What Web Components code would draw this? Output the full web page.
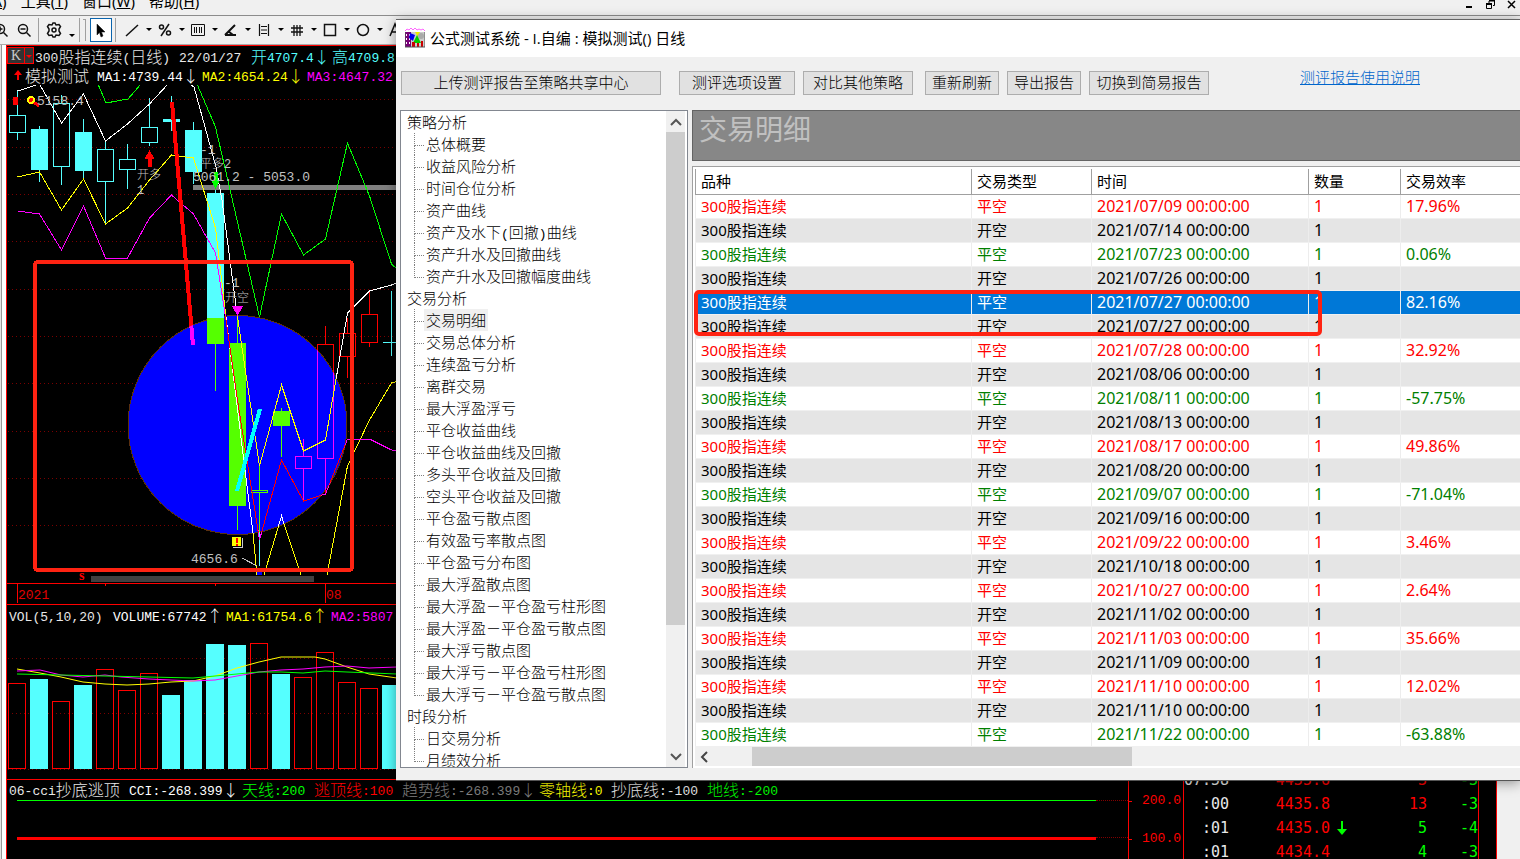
<!DOCTYPE html>
<html lang="zh-CN">
<head>
<meta charset="utf-8">
<title>公式测试系统</title>
<style>
html,body{height:100%;margin:0}
body{background:#f0f0f0;overflow:hidden;font-family:"Noto Sans","Noto Sans CJK SC",sans-serif;font-size:15px;color:#000}
</style>
</head>
<body>
<trading-desk>
  <menu-bar slot="menu"></menu-bar>
  <tool-strip slot="tools"></tool-strip>
  <price-pane slot="panes"></price-pane>
  <volume-pane slot="panes"></volume-pane>
  <cci-pane slot="panes"></cci-pane>
  <value-axis slot="axis"></value-axis>
  <tick-list slot="ticks"></tick-list>
  <report-window slot="windows">
    <span slot="title">公式测试系统 - I.自编 : 模拟测试() 日线</span>
    <report-actions slot="actions"></report-actions>
    <report-tree slot="nav"></report-tree>
    <trade-report slot="content"></trade-report>
  </report-window>
</trading-desk>

<script>
const define = (name, html, setup) => {
  const tpl = document.createElement('template');
  tpl.innerHTML = '<style>:host,*{box-sizing:border-box}</style>' + html;
  customElements.define(name, class extends HTMLElement {
    constructor() {
      super();
      this.attachShadow({ mode: 'open' }).append(tpl.content.cloneNode(true));
      if (setup) setup.call(this, this.shadowRoot);
    }
  });
};

define('trading-desk', `
<style>
:host{display:flex;flex-direction:column;height:100vh;position:relative;overflow:hidden}
.desk{flex:1;min-height:0;display:grid;grid-template-columns:6px minmax(0,1fr) 55px 295px 18px 24px}
.rail{border-right:4px solid #fff;border-left:1px solid #e4e4e4;background:#999}
.panes{background:#000;border-left:1px solid #f00;border-top:1px solid #f00;display:flex;flex-direction:column;min-width:0;overflow:hidden}
.col{background:#000;border-left:1px solid #f00;display:flex;flex-direction:column;justify-content:flex-end;overflow:hidden}
.edge{border-left:1px solid #f00}
</style>
<slot name="menu"></slot><slot name="tools"></slot>
<div class="desk"><div class="rail"></div>
<div class="panes"><slot name="panes"></slot></div>
<div class="col"><slot name="axis"></slot></div>
<div class="col"><slot name="ticks"></slot></div>
<div class="col"></div><div class="edge"></div></div>
<slot name="windows"></slot>`);

define('menu-bar', `
<style>
:host{display:flex;align-items:flex-end;height:15px;overflow:hidden;flex:none}
nav{display:flex;flex:1;gap:14px;margin-left:-12px}
a{color:#000;text-decoration:none;line-height:28px;font-size:15px;white-space:nowrap}
.win{display:flex;gap:12px;padding-right:4px;align-self:flex-start}
.win button{border:0;background:none;padding:0;width:9px;height:9px;display:block}
svg{display:block}
</style>
<nav><a href="#">(<u>A</u>)</a><a href="#">工具(<u>T</u>)</a><a href="#">窗口(<u>W</u>)</a><a href="#">帮助(<u>H</u>)</a></nav>
<div class="win">
<button aria-label="最小化"><svg width="9" height="9"><path d="M1 7h6" stroke="#000" stroke-width="2"/></svg></button>
<button aria-label="还原"><svg width="9" height="9" fill="none" stroke="#000"><path d="M3 3V1h5.500v4.500H7M3 .5h6M.5 4v4.500h5V4M0 3.500h6M0 4.500h6"/></svg></button>
<button aria-label="关闭"><svg width="9" height="9"><path d="M1 1l7 7M8 1L1 8" stroke="#000" stroke-width="1.500"/></svg></button>
</div>`);

define('tool-strip', `
<style>
:host{display:flex;align-items:center;height:30px;border-top:1px solid #8c8c8c;border-bottom:1px solid #aaa;background:#f0f0f0;flex:none}
button{border:0;background:none;padding:0;display:flex;align-items:center;flex:none;height:24px}
svg{display:block;fill:none;stroke:#111;stroke-width:1.500;flex:none}
.zoom{width:23px;justify-content:center}
.first{margin-left:-11px}
.gear{width:40px;padding-left:7px;gap:7px}
.car{fill:#000;stroke:none}
.low{align-self:flex-end;margin-bottom:4px}
.sep{width:1px;height:24px;background:#a0a0a0;flex:none}
.mid{margin-left:3px}
.grip{width:3px;height:22px;border-right:1px solid #a0a0a0;border-top:1px solid #a0a0a0;margin:0 4px 0 3px}
.sel{width:22px;border:1px solid #0a64ad;background:#fff;justify-content:center}
.last{margin-right:8px}
.tool{width:33px;gap:6px}
</style>
<button class="zoom first" aria-label="放大"><svg width="16" height="16"><circle cx="7" cy="7" r="4.500"/><path d="M10.500 10.500l4 4M4.500 7h5M7 4.500v5"/></svg></button>
<button class="zoom" aria-label="缩小"><svg width="16" height="16"><circle cx="7" cy="7" r="4.500"/><path d="M10.500 10.500l4 4M4.500 7h5"/></svg></button>
<span class="sep mid"></span>
<button class="gear" aria-label="设置"><svg width="16" height="16"><path d="M6 3l1-2h2l1 2 3-.5 1.500 2L13 7v2l1.500 2.500-1.500 2-3-.5-1 2H7l-1-2-3 .5-1.500-2L3 9V7L1.500 4.500l1.500-2z"/><circle cx="8" cy="8" r="2"/></svg><svg class="car low" width="6" height="4"><path d="M0 0h6L3 3z"/></svg></button>
<span class="sep"></span><span class="grip"></span>
<button class="sel" aria-label="选择"><svg width="14" height="16"><path d="M3 2v11l2.500-2.500L7 15l2-1-1.500-4H11z" fill="#000" stroke-width=".5"/></svg></button>
<span class="sep mid last"></span>`, function (root) {
  const tools = {
    '直线': '<path d="M2 14L14 3"/>',
    '百分比': '<path d="M4 14L12 2"/><circle cx="4.500" cy="5" r="2"/><circle cx="11.500" cy="11" r="2"/>',
    '周期线': '<path d="M1.500 2.500h13v11h-13zM4.500 5v6M6.500 5v6M9.500 5v6M11.500 5v6" stroke-width="1"/>',
    '角度线': '<path d="M2 13L12 3M2 13h11M5 9l5 4" stroke-width="2"/>',
    '平行线': '<path d="M3.500 2v12M12.500 2v12M5 4.500h6M5 8h6M5 11.500h6" stroke-width="1.200"/>',
    '网格': '<path d="M5 3v11M8 3v11M11 3v11M2 6h12M2 10h12" stroke-width="1.300"/>',
    '矩形': '<path d="M2.500 2.500h11v11h-11z"/>',
    '圆形': '<circle cx="8" cy="8" r="5.500"/>',
    '文字': '<path d="M2 14L7 2l5 12M4 10h6"/>' };
  for (const [name, art] of Object.entries(tools)) {
    const b = document.createElement('button');
    b.className = 'tool'; b.ariaLabel = name;
    b.innerHTML = `<svg width="16" height="16">${art}</svg><svg class="car" width="6" height="4"><path d="M0 0h6L3 3z"/></svg>`;
    root.append(b);
  }
});

/* One legend entry; its width follows an 8px character cell, 16px for full-width glyphs. */
customElements.define('legend-item', class extends HTMLElement {
  constructor() { super(); this.attachShadow({ mode: 'open' }); }
  connectedCallback() {
    const text = this.getAttribute('text');
    let cells = 0, html = '';
    for (const part of text.match(/[\x20-\x7e]+|[^\x20-\x7e]+/g)) {
      const half = /[\x20-\x7e]/.test(part);
      cells += part.length * (half ? 1 : 2);
      html += half ? `<span>${part}</span>` : part;
    }
    this.shadowRoot.innerHTML = `<style>:host{display:block;flex:none;white-space:pre;width:${cells * 8}px;font:300 16px/18px "Noto Sans CJK SC",sans-serif;height:19px}span{font:13px/15px "Liberation Mono",monospace;vertical-align:1px}</style>${html}`;
  }
});
define('legend-row', `<style>:host{display:flex;height:19px;gap:8px;padding-left:2px;overflow:hidden;flex:none}</style><slot></slot>`);

const item = (text, color, tight) => `<legend-item text="${text}" style="color:${color}${tight ? ';margin-right:-7px' : ''}"></legend-item>`;
const centre = i => 17.5 + 22 * i;
const grid = rows => rows.map(y => `<path d="M8 ${y}.5H1200" stroke="#7a0000" stroke-dasharray="1 3"/>`).join('');

define('price-pane', `
<style>
:host{display:block;height:559px;flex:none;border-bottom:1px solid #f00;color:#e0e0e0;padding-top:1px}
.head{display:flex}
.k{width:27px;height:17px;border:1px solid #f00;background:#333;color:#ccc;padding:0;display:flex;font:14px/15px "Liberation Serif",serif;flex:none}
.k b{flex:1;font-weight:400;text-align:center}
.k svg{width:9px;height:15px;border-left:1px solid #f00;flex:none}
.up{width:16px;height:19px;flex:none}
svg{display:block}
.chart{width:100%;height:519px;overflow:hidden;shape-rendering:crispEdges}
text{font:13px "Liberation Mono","Noto Sans CJK SC",monospace;fill:#c0c0c0}
.cjk{font:300 12px "Liberation Mono","Noto Sans CJK SC",monospace}
.axis{fill:#e00000}
</style>
<div class="head"><button class="k"><b>K</b><svg><path d="M1 7h6L4 10z" fill="#f00"/></svg></button>
<legend-row style="padding-left:1px">${item('300股指连续(日线)', '#e8e8e8', 0)}${item('22/01/27', '#e8e8e8', 0)}${item('开4707.4↓', '#5ff', 1)}${item('高4709.8', '#5ff', 0)}</legend-row></div>
<div class="head"><svg class="up"><path d="M11 4l-4 5h3v5h2V9h3z" fill="#f00"/></svg>
<legend-row>${item('模拟测试', '#e8e8e8', 0)}${item('MA1:4739.44↓', '#fff', 1)}${item('MA2:4654.24↓', '#ff0', 1)}${item('MA3:4647.32', '#f0f', 0)}</legend-row></div>
<svg class="chart"></svg>`, function (root) {
  const C = '#5ff', G = '#5f0', R = '#f00', M = '#f0f';
  const candle = (i, hi, top, bot, lo, color, fill) => {
    const x = centre(i);
    const body = fill ? `<rect x="${x - 8.5}" y="${top}" width="17" height="${bot - top}" fill="${color}"/>`
      : `<rect x="${x - 8}" y="${top + .5}" width="16" height="${bot - top - 1}" fill="none" stroke="${color}"/>`;
    return `<path d="M${x} ${hi}V${top}M${x} ${bot}V${lo}" stroke="${color}"/>${body}`;
  };
  const line = (pts, color, w = 1) => `<polyline points="${pts}" fill="none" stroke="${color}" stroke-width="${w}"/>`;
  const green = ['98,84 106,103 128,99 141,84', '197,84 215.5,127 259.5,317 281.5,214 303.5,255 325.5,239 347.5,143 369.5,196 391.5,264 398,270'];
  const upper = ['17.5,91 39.5,84 61.5,123 83.5,94 105.5,141 127.5,124 149.5,104 168,84', '190,84 194,87 216,167 222,200 237.5,317 259.5,466 281.5,385 303.5,451 325.5,440 347.5,313 369.5,291 391.5,285 398,282'];
  const mid = ['17.5,177 39.5,172 61.5,210 83.5,179 105.5,224 127.5,208 149.5,180 171.5,155 193.5,158 215.5,228 226,317 237,405 245,470 253,533 257,575', '264,575 281.5,516 301,575', '327,575 347.5,466 369.5,420 391.5,383 398,381'];
  const low = ['17.5,211 39.5,214 61.5,250 83.5,206 105.5,258 127.5,258 149.5,218 171.5,195 193.5,214 215.5,253 226,320 237,397 259.5,540 281.5,460 303.5,501 325.5,494 347.5,439 369.5,439 391.5,450 398,451'];
  const all = (a, c) => a.map(p => line(p, c)).join('');
  const disc = '<circle cx="237.500" cy="425" r="109.500"';
  root.querySelector('.chart').innerHTML = `
<defs><clipPath id="disc">${disc}/></clipPath></defs>
<g transform="translate(-7 -85)">
${grid([99, 147, 194, 241, 289, 336, 383, 431, 478, 525])}
<rect x="193" y="185" width="1000" height="5" fill="#808080"/>
${disc} fill="#00f" stroke="#5a3010"/>
${candle(0, 91, 115, 133, 140, C, 0)}${candle(1, 126, 129, 170, 182, C, 1)}${candle(2, 95, 103, 167, 185, C, 0)}${candle(3, 119, 132, 171, 179, C, 1)}
${candle(4, 140, 149, 182, 224, C, 0)}${candle(5, 144, 159, 170, 189, C, 0)}${candle(6, 98, 127, 143, 146, C, 0)}${candle(7, 96, 119, 122, 131, C, 1)}
${candle(8, 122, 130, 172, 184, C, 1)}${candle(9, 190, 193, 320, 320, C, 1)}
${candle(9, 318, 318, 344, 391, G, 1)}${candle(10, 317, 343, 506, 530, G, 1)}${candle(11, 466, 490, 493, 532, G, 0)}${candle(12, 408, 411, 426, 457, G, 1)}
${candle(13, 439, 456, 469, 500, M, 0)}${candle(14, 326, 344, 459, 494, R, 0)}${candle(15, 318, 333, 357, 378, R, 0)}${candle(16, 291, 314, 343, 347, R, 0)}
<path d="M383 342.500h18M391.500 291v65M259.500 532v34" stroke="${C}"/>
${all(green, '#0f0')}${all(upper, '#fff')}${all(mid, '#ff0')}${all(low, M)}${line('172,102 193,345', R, 4)}
<g clip-path="url(#disc)">${candle(14, 330, 344, 459, 494, M, 0)}
${all(upper, '#ff0')}${all(mid, '#fff')}${all(low, R)}${line('172,102 193,345', M, 4)}</g>
${line('260,409 237,491', '#0ff', 4)}
<path d="M242 558l15 8" stroke="#c0c0c0"/><path d="M257 572h5v3h-5z" fill="#00f"/>
<path d="M13 97h5v8h-5z" fill="#f00"/><path d="M31 100l8 6" stroke="#f00" stroke-width="3"/><circle cx="31" cy="100" r="3" fill="#f00" stroke="#ff0" stroke-width="2"/>
<path d="M149.500 150l-5 9h3v8h4v-8h3z" fill="#f00"/><path d="M215.500 189l-4-8h2v-9h4v9h2z" fill="#0f0"/><path d="M232 306h11l-5.500 10z" fill="#f0f"/>
<path d="M232 537h9v9h-9z" fill="#ff0"/><path d="M233 547.500h9.500V538" stroke="#ccc" fill="none"/><path d="M236.500 538v5M236.500 544v2" stroke="#f00" stroke-width="2"/>
<text x="37" y="105">5158.4</text><text x="200" y="154">-1</text><text class="cjk" x="200" y="168">平多2</text><text x="193" y="181">5061.2 - 5053.0</text>
<text class="cjk" x="137" y="179">开多</text><text class="cjk" x="137" y="194">1</text><text x="224" y="287">-1</text><text class="cjk" x="225" y="302">开空</text><text x="191" y="563">4656.6</text>
<rect x="35" y="262" width="317" height="308" rx="3" fill="none" stroke="#ff2312" stroke-width="4"/>
<text x="79" y="580" style="font:bold 14px 'Liberation Serif',serif;fill:#f00">s</text><rect x="91" y="576" width="223" height="6" fill="#404040"/>
<path d="M7 583.500H1200M17.500 583v20M325.500 583v20M105.500 583v3M215.500 583v3" stroke="#f00"/>
<text class="axis" x="18" y="599">2021</text><text class="axis" x="326" y="599">08</text></g>`;
});

define('volume-pane', `
<style>:host{display:block;height:175px;flex:none;border-bottom:1px solid #f00;padding-top:1px}svg{display:block;width:100%;height:154px}</style>
<legend-row>${item('VOL(5,10,20)', '#e8e8e8', 0)}${item('VOLUME:67742↑', '#fff', 1)}${item('MA1:61754.6↑', '#ff0', 1)}${item('MA2:5807', '#f0f', 0)}</legend-row><svg></svg>`, function (root) {
  const tops = [683, -679, 701, -685, 669, 690, 673, -695, -680, -644, -645, 643, -674, 677, 652, 682, 688, -685];
  const bars = tops.map((t, i) => { const y = Math.abs(t), x = 8 + 22 * i;
    return t < 0 ? `<rect x="${x}" y="${y}" width="18" height="${769 - y}" fill="#5ff"/>` : `<rect x="${x + .5}" y="${y + .5}" width="17" height="${768 - y}" fill="none" stroke="#f00"/>`; }).join('');
  const l = (p, c) => `<polyline points="${p}" fill="none" stroke="${c}"/>`;
  root.querySelector('svg').innerHTML = `<g transform="translate(-7 -625)">${grid([658, 713, 769])}${bars}
${l('17,669 40,673 61,677 83,682 105,684 127,685 149,684 171,682 193,681 215,676 237,668 259,662 281,657 315,657 325,659 347,667 369,674 397,678', '#ff0')}
${l('17,671 40,670 61,675 83,677 105,675 121,677 149,679 171,680 193,681 215,680 237,676 259,672 281,670 303,669 325,667 347,666 369,668 397,667', '#f0f')}
${l('17,674 61,675 105,676 149,677 193,678 215,676 237,674 259,672 281,672 303,673 325,671 347,672 397,674', '#0f0')}</g>`;
});

define('cci-pane', `
<style>:host{display:block;flex:1;min-height:0}
.plot{position:relative;height:60px;display:grid;grid-template-rows:37px 1fr;padding-top:1px}
.lv{display:flex}
.lv::before{content:"";width:10px}
.lv i{flex:1}
.lv::after{content:"";width:32px;border-top:1px dotted #800000}
.hi i{border-top:1px solid #0f0}.lo i{border-top:3px solid #f00}</style>
<legend-row>${item('06-cci抄底逃顶', '#e8e8e8', 0)}${item('CCI:-268.399↓', '#fff', 1)}${item('天线:200', '#0f0', 0)}${item('逃顶线:100', '#f00', 0)}${item('趋势线:-268.399↓', '#808080', 1)}${item('零轴线:0', '#ff0', 0)}${item('抄底线:-100', '#e8e8e8', 0)}${item('地线:-200', '#0f0', 0)}</legend-row>
<div class="plot"><div class="lv hi"><i></i></div><div class="lv lo"><i></i></div></div>`);

define('value-axis', `
<style>:host{display:block;height:77px;text-align:right;font:13px/38px "Liberation Mono",monospace;color:#f00;padding-right:2px}
div{display:flex;align-items:center;justify-content:space-between}div::before{content:"";width:3px;border-top:1px solid #f00}</style>
<div><span>200.0</span></div><div><span>100.0</span></div>`);

define('tick-list', `
<style>:host{display:block;height:91px;overflow:hidden}
table{width:100%;border-collapse:collapse;table-layout:fixed;font:15px/24px "DejaVu Sans Mono",monospace}
td{padding:0;height:24px;text-align:right;white-space:pre}
.t{color:#e8e8e8}.p{color:#f00}.g{color:#0f0}svg{display:block;margin:0 auto}</style>
<table><colgroup><col style="width:45px"><col style="width:101px"><col style="width:24px"><col style="width:73px"><col></colgroup><tbody></tbody></table>`, function (root) {
  const arrow = '<svg width="12" height="16"><path d="M6 1v10" stroke="#0f0" stroke-width="2"/><path d="M1 9h10l-5 6z" fill="#0f0"/></svg>';
  root.querySelector('tbody').innerHTML = [['07:58', '4435.6', '', '3', 'p', '-3'], [':00', '4435.8', '', '13', 'p', '-3'], [':01', '4435.0', arrow, '5', 'g', '-4'], [':01', '4434.4', '', '4', 'g', '-3']]
    .map(([t, p, a, q, c, d]) => `<tr><td class="t">${t}</td><td class="p">${p}</td><td>${a}</td><td class="${c}">${q}</td><td class="g">${d}</td></tr>`).join('');
});

define('report-window', `
<style>
:host{position:absolute;inset:19px 0 78px 396px;display:flex;flex-direction:column;background:#f0f0f0;border-top:1px solid #646464;border-bottom:1px solid #555;box-shadow:0 2px 12px rgba(0,0,0,.4)}
header{display:flex;align-items:center;gap:5px;height:37px;background:#fff;padding:0 0 2px 9px;font:15px "Open Sans","Noto Sans CJK SC",sans-serif;flex:none}
header svg{flex:none}
.actions{height:53px;flex:none}
.body{flex:1;min-height:0;display:grid;grid-template-columns:288px minmax(0,1fr);gap:4px;padding:0 0 12px 4px}
::slotted([slot=nav]),::slotted([slot=content]){min-height:0;min-width:0}
</style>
<header><svg width="20" height="20" viewBox="0 0 20 20"><path d="M0 3l2-2 2 1 2-2 2 2 2-2 2 2 2-1 2 1 2-1 2 2" fill="none" stroke="#f6f"/><path d="M0 4h20v15H0z" fill="#ccc"/><path d="M0 4h6v15H0z" fill="#707"/><path d="M1 6h1v2H1zM4 6h1v2H4zM1 10h1v2H1zM4 10h1v2H4zM1 14h1v2H1zM4 14h1v2H4z" fill="#fff"/><path d="M5 5l5 2-2 6-4-3z" fill="#00e"/><path d="M10 4h5l-2 5z" fill="#ee0"/><circle cx="16" cy="8" r="3" fill="#aaa"/><path d="M8 15l4-8 4 8z" fill="#0c0"/><path d="M7 14h3v5H7zM12 15h2v4h-2zM16 13h2v6h-2z" fill="#c00"/><path d="M0 4v15h20V4" fill="none" stroke="#555"/></svg><slot name="title"></slot></header>
<div class="actions"><slot name="actions"></slot></div>
<div class="body"><slot name="nav"></slot><slot name="content"></slot></div>`);

define('report-actions', `
<style>
:host{display:flex;align-items:flex-start;gap:8px;padding:14px 0 0 5px;font:15px/20px "Noto Sans CJK SC",sans-serif}
button{height:24px;border:1px solid #adadad;background:#e1e1e1;padding:0 0 2px;font:inherit;font-weight:300;color:#000;flex:none;white-space:nowrap}
.xl{width:260px;margin-right:10px}.l{width:116px}.m{width:110px;margin-right:4px}.s{width:74px}.w{width:120px}
a{color:#0066cc;font-weight:300;margin-left:83px;line-height:11px;white-space:nowrap}
</style>
<button class="xl">上传测评报告至策略共享中心</button><button class="l">测评选项设置</button><button class="m">对比其他策略</button><button class="s">重新刷新</button><button class="s">导出报告</button><button class="w">切换到简易报告</button><a href="#">测评报告使用说明</a>`);

define('report-tree', `
<style>
:host{display:flex;border:1px solid #828790;background:#fff;overflow:hidden;font:300 15px/22px "Noto Sans CJK SC",sans-serif}
.tree{flex:1;overflow:hidden}
ul{list-style:none;margin:0;padding:0}
.tree>ul>li{padding-left:6px}
li ul li{display:flex;height:22px;padding-left:7px;position:relative}
li ul li::before{content:"";width:9px;height:12px;border-left:1px dotted #808080;border-bottom:1px dotted #808080;flex:none}
li ul li:not(:last-child)::after{content:"";position:absolute;left:7px;top:12px;height:10px;border-left:1px dotted #808080}
span{padding:0 2px;white-space:nowrap}
i.p{font:13px "Liberation Mono",monospace}
.on{background:#f0f0f0}
.bar{width:19px;background:#f0f0f0;display:flex;flex-direction:column;margin-right:2px}
.bar button{height:21px;border:0;background:none;padding:0;display:grid;place-items:center}
.thumb{flex:495;background:#cdcdcd}.track{flex:121}
</style>
<div class="tree"><ul></ul></div>
<div class="bar"><button aria-label="向上"><svg width="12" height="8"><path d="M1 7l5-5 5 5" fill="none" stroke="#555" stroke-width="2"/></svg></button><div class="thumb"></div><div class="track"></div><button aria-label="向下"><svg width="12" height="8"><path d="M1 1l5 5 5-5" fill="none" stroke="#555" stroke-width="2"/></svg></button></div>`, function (root) {
  const data = {
    '策略分析': ['总体概要', '收益风险分析', '时间仓位分析', '资产曲线', '资产及水下(回撤)曲线', '资产升水及回撤曲线', '资产升水及回撤幅度曲线'],
    '交易分析': ['交易明细', '交易总体分析', '连续盈亏分析', '离群交易', '最大浮盈浮亏', '平仓收益曲线', '平仓收益曲线及回撤', '多头平仓收益及回撤', '空头平仓收益及回撤', '平仓盈亏散点图', '有效盈亏率散点图', '平仓盈亏分布图', '最大浮盈散点图', '最大浮盈－平仓盈亏柱形图', '最大浮盈－平仓盈亏散点图', '最大浮亏散点图', '最大浮亏－平仓盈亏柱形图', '最大浮亏－平仓盈亏散点图'],
    '时段分析': ['日交易分析', '月绩效分析'] };
  const half = t => t.replace(/[()]/g, '<i class="p">$&</i>');
  root.querySelector('ul').innerHTML = Object.entries(data).map(([k, v]) => `<li>${k}<ul>${v.map(t => `<li><span${t === '交易明细' ? ' class="on"' : ''}>${half(t)}</span></li>`).join('')}</ul></li>`).join('');
});

define('trade-report', `
<style>
:host{display:flex;flex-direction:column}
h1{margin:0 0 5px;height:51px;flex:none;background:#878787;border:1px solid #646464;border-right:0;color:#c0c0c0;font:400 28px/34px "Noto Sans CJK SC",sans-serif;padding-left:6px}
.list{flex:1;min-height:0;background:#fff;border-top:1px solid #a0a0a0;border-left:1px solid #a0a0a0;display:flex;flex-direction:column;padding:2px 0 1px 2px;position:relative}
table{border-collapse:collapse;table-layout:fixed;width:100%;flex:none}
th,td{padding:0 0 0 5px;text-align:left;font-weight:400;font-size:15px;white-space:nowrap;overflow:hidden}
th{height:25px;line-height:24px;border-left:1px solid #a0a0a0;border-bottom:1px solid #a0a0a0}
td{height:24px;line-height:23px;border-left:1px solid #ededed;border-bottom:1px solid #f0f0f0}
td:nth-child(n+3){font-size:16px}
tr:nth-child(even) td{background:#e5e5e5}
.r{color:#f00}.g{color:#008000}tr.sel td{background:#0078d7;color:#fff}
.mark{position:absolute;left:1px;top:123px;width:628px;height:46px;border:4px solid #ff2312;border-radius:5px}
.bar{height:19px;flex:none;background:#f0f0f0;display:flex;margin-top:auto;margin-bottom:1px}
.bar button{width:17px;border:0;background:none;padding:0;display:grid;place-items:center}
.bar i{margin-left:40px;width:46%;background:#cdcdcd}
</style>
<h1>交易明细</h1>
<div class="list"><table><colgroup><col style="width:276px"><col style="width:120px"><col style="width:217px"><col style="width:92px"><col></colgroup>
<thead><tr><th>品种</th><th>交易类型</th><th>时间</th><th>数量</th><th>交易效率</th></tr></thead><tbody></tbody></table>
<div class="mark"></div>
<div class="bar"><button aria-label="向左"><svg width="8" height="12"><path d="M7 1L2 6l5 5" fill="none" stroke="#444" stroke-width="2"/></svg></button><i></i></div></div>`, function (root) {
  const rows = [['07/09', '17.96%'], ['07/14'], ['07/23', '0.06%'], ['07/26'], ['07/27', '82.16%'], ['07/27'], ['07/28', '32.92%'], ['08/06'], ['08/11', '-57.75%'], ['08/13'], ['08/17', '49.86%'], ['08/20'], ['09/07', '-71.04%'], ['09/16'], ['09/22', '3.46%'], ['10/18'], ['10/27', '2.64%'], ['11/02'], ['11/03', '35.66%'], ['11/09'], ['11/10', '12.02%'], ['11/10'], ['11/22', '-63.88%']];
  root.querySelector('tbody').innerHTML = rows.map(([d, e], i) => {
    const cls = i === 4 ? 'sel' : !e ? '' : e[0] === '-' || e === '0.06%' ? 'g' : 'r';
    return `<tr class="${cls}"><td>300股指连续</td><td>${e ? '平空' : '开空'}</td><td>2021/${d} 00:00:00</td><td>1</td><td>${e || ''}</td></tr>`;
  }).join('');
});
</script>
</body>
</html>
